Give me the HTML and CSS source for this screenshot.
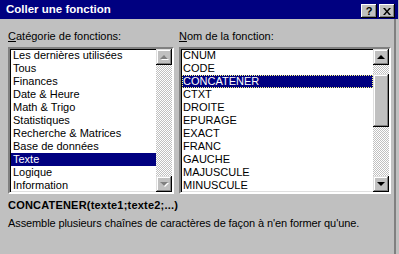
FILE: index.html
```html
<!DOCTYPE html>
<html lang="fr">
<head>
  <meta charset="UTF-8">
  <title>Coller une fonction</title>
  <link rel="stylesheet" href="styles.css">
</head>
<body>
  <div class="dialog">
    <div class="titlebar">
      <span class="title">Coller une fonction</span>
      <div class="caption-buttons">
        <div class="cap-btn help">?</div>
        <div class="cap-btn">
          <svg width="8" height="7" viewBox="0 0 8 7">
            <path d="M0 0h2l2 2.5L6 0h2L5 3.5 8 7H6L4 4.5 2 7H0l3-3.5z" fill="#000"/>
          </svg>
        </div>
      </div>
    </div>

    <div class="client">
      <div class="columns">
        <div class="col col-left">
          <div class="label"><u>C</u>atégorie de fonctions:</div>
          <div class="listbox">
            <ul class="items">
              <li>Les dernières utilisées</li>
              <li>Tous</li>
              <li>Finances</li>
              <li>Date &amp; Heure</li>
              <li>Math &amp; Trigo</li>
              <li>Statistiques</li>
              <li>Recherche &amp; Matrices</li>
              <li>Base de données</li>
              <li class="selected">Texte</li>
              <li>Logique</li>
              <li>Information</li>
            </ul>
            <div class="scrollbar">
              <div class="sb-btn"><span class="arrow up disabled"></span></div>
              <div class="track"></div>
              <div class="sb-btn"><span class="arrow down disabled"></span></div>
            </div>
          </div>
        </div>

        <div class="col col-right">
          <div class="label"><u>N</u>om de la fonction:</div>
          <div class="listbox">
            <ul class="items">
              <li>CNUM</li>
              <li>CODE</li>
              <li class="selected focused">CONCATENER</li>
              <li>CTXT</li>
              <li>DROITE</li>
              <li>EPURAGE</li>
              <li>EXACT</li>
              <li>FRANC</li>
              <li>GAUCHE</li>
              <li>MAJUSCULE</li>
              <li>MINUSCULE</li>
            </ul>
            <div class="scrollbar">
              <div class="sb-btn"><span class="arrow up"></span></div>
              <div class="track">
                <div class="thumb"></div>
              </div>
              <div class="sb-btn"><span class="arrow down"></span></div>
            </div>
          </div>
        </div>
      </div>

      <div class="signature">CONCATENER(texte1;texte2;...)</div>
      <div class="description">Assemble plusieurs chaînes de caractères de façon à n'en former qu'une.</div>
    </div>
  </div>
</body>
</html>
```

FILE: styles.css
```css
body {
  margin: 0;
  background-color: #c0c0c0;
  font-family: "Liberation Sans", Arial, sans-serif;
  font-size: 11px;
  line-height: 13px;
  color: #000;
}

.dialog {
  width: 398px;
  height: 254px;
}

/* Title bar */
.titlebar {
  height: 19px;
  background-color: #000080;
  display: flex;
  justify-content: space-between;
  padding: 0 3px 0 6px;
}
.title {
  color: #fff;
  font-weight: bold;
  font-size: 11.5px;
  line-height: 19px;
}
.caption-buttons {
  display: flex;
  gap: 2px;
  margin-top: 4px;
}
.cap-btn {
  width: 16px;
  height: 14px;
  background-color: #c0c0c0;
  box-shadow: inset -1px -1px #000, inset 1px 1px #fff, inset -2px -2px #808080;
  display: flex;
  align-items: center;
  justify-content: center;
}
.cap-btn.help {
  font-weight: bold;
  font-size: 11px;
  line-height: 14px;
}

/* Client area */
.client {
  width: 386px;
  height: 235px;
  padding: 11px 0 0 8px;
  border-right: 2px solid #808080;
}
.columns {
  display: flex;
  gap: 5px;
}
.col-left {
  width: 166px;
}
.col-right {
  width: 212px;
}
.label {
  margin-bottom: 4px;
}

.listbox {
  display: flex;
  height: 143px;
  border: 2px solid;
  border-color: #808080 #fff #fff #808080;
  box-shadow: inset 1px 1px #000, inset -1px -1px #dfdfdf;
  background-color: #fff;
}
.items {
  list-style: none;
  margin: 0;
  padding: 0 0 0 1px;
  flex: 1;
}
.items li {
  height: 13px;
  padding-left: 2px;
  white-space: nowrap;
}
.col-right .items li {
  padding-left: 1px;
}
.items li.selected {
  background-color: #000080;
  color: #fff;
}
.items li.focused {
  outline: 1px dotted #ffff80;
  outline-offset: -1px;
}

/* Scrollbars */
.scrollbar {
  width: 16px;
  display: flex;
  flex-direction: column;
}
.sb-btn {
  height: 16px;
  background-color: #c0c0c0;
  box-shadow: inset -1px -1px #000, inset 1px 1px #dfdfdf, inset -2px -2px #808080, inset 2px 2px #fff;
  display: flex;
  align-items: center;
  justify-content: center;
}
.track {
  flex: 1;
  background-image: conic-gradient(#fff 25%, #c0c0c0 0 50%, #fff 0 75%, #c0c0c0 0);
  background-size: 2px 2px;
}
.thumb {
  margin-top: 9px;
  height: 53px;
  background-color: #c0c0c0;
  box-shadow: inset -1px -1px #000, inset 1px 1px #dfdfdf, inset -2px -2px #808080, inset 2px 2px #fff;
}
.arrow {
  width: 0;
  height: 0;
  border-left: 4px solid transparent;
  border-right: 4px solid transparent;
}
.arrow.up {
  border-bottom: 4px solid #000;
  margin-top: -1px;
}
.arrow.down {
  border-top: 4px solid #000;
}
.arrow.up.disabled {
  border-bottom-color: #808080;
  filter: drop-shadow(1px 1px 0 #fff);
}
.arrow.down.disabled {
  border-top-color: #808080;
  filter: drop-shadow(1px 1px 0 #fff);
}

/* Function help */
.signature {
  font-weight: bold;
  letter-spacing: 0.2px;
  margin-top: 5px;
}
.description {
  letter-spacing: -0.1px;
  margin-top: 5px;
}
```
